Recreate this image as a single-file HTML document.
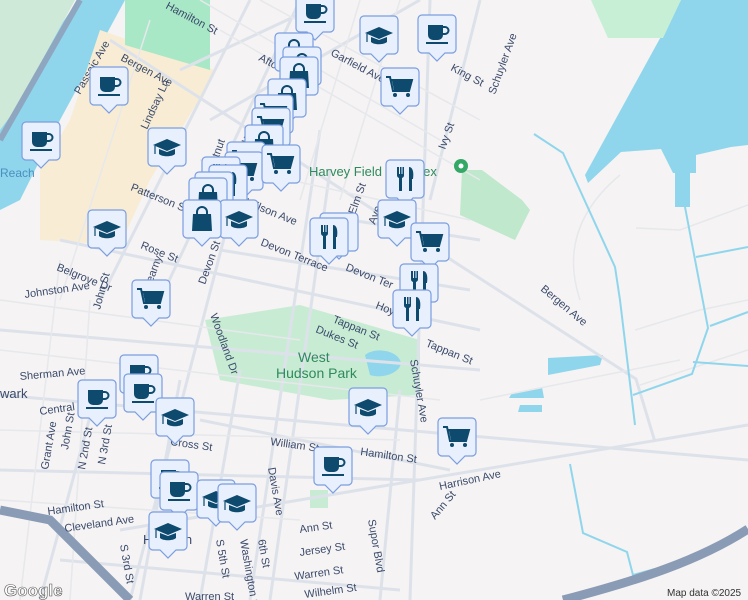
<!DOCTYPE html>
<html><head><meta charset="utf-8"><style>
body{margin:0;width:748px;height:600px;overflow:hidden;background:#f5f3f3;font-family:"Liberation Sans",sans-serif}
#map{position:absolute;left:0;top:0}
</style></head><body>
<svg id="map" width="748" height="600" viewBox="0 0 748 600">
<defs>
<g id="pin"><path d="M4 0h30a4 4 0 0 1 4 4v30a4 4 0 0 1-4 4h-7l-8 8-8-8H4a4 4 0 0 1-4-4V4a4 4 0 0 1 4-4z" fill="#e8effd" stroke="#7a9ee0" stroke-width="1.2"/></g>
<g id="cup"><use href="#pin"/><path d="M10 10h15v10a5 5 0 0 1-5 5h-5a5 5 0 0 1-5-5z" fill="#0d4a6e"/><path d="M25 12h2a3 3 0 0 1 0 7h-2" fill="none" stroke="#0d4a6e" stroke-width="2"/><rect x="8" y="27" width="22" height="2" fill="#0d4a6e"/></g>
<g id="cap"><use href="#pin"/><path d="M5 17l14-6 14 6-14 6z" fill="#0d4a6e"/><path d="M11 21v5c3 3 13 3 16 0v-5l-8 3z" fill="#0d4a6e"/><line x1="7" y1="18" x2="7" y2="26" stroke="#0d4a6e" stroke-width="1.2"/></g>
<g id="cart"><use href="#pin"/><path d="M5 9h4l3 14h16l3-11H10" fill="none" stroke="#0d4a6e" stroke-width="2"/><path d="M11 13h19l-2 9H13z" fill="#0d4a6e"/><circle cx="14" cy="27" r="2" fill="#0d4a6e"/><circle cx="27" cy="27" r="2" fill="#0d4a6e"/></g>
<g id="bag"><use href="#pin"/><path d="M10 14h18l1 17H9z" fill="#0d4a6e"/><path d="M14 15v-3a5 5 0 0 1 10 0v3" fill="none" stroke="#0d4a6e" stroke-width="2"/></g>
<g id="fork"><use href="#pin"/><path d="M11 7v8a3 3 0 0 0 2 3v13h3V18a3 3 0 0 0 2-3V7h-1.5v7h-1V7H14v7h-1V7z" fill="#0d4a6e"/><path d="M23 7c4 0 5 6 4 12h-1v12h-3z" fill="#0d4a6e"/></g>
</defs>
<!-- water -->
<path d="M78 0L125 0 60 120 20 200 0 210 0 120 30 70z" fill="#8fd6ec"/>
<path d="M681 0H748V145L731 147 696 155 696 173 673 173 661 149 621 152 588 183 585 175z" fill="#8fd6ec"/>
<rect x="675" y="172" width="15" height="35" fill="#8fd6ec"/>
<path d="M591 0h90l-18 38h-55z" fill="#c6efd6"/>
<path d="M0 0h75L15 110 0 130z" fill="#cfe9d8"/>
<path d="M80 0L0 140" stroke="#8fa6c0" stroke-width="6"/>
<!-- beige -->
<path d="M100 30L215 70 205 90 150 180 120 245 40 240 40 170 70 120z" fill="#f8edd4"/>
<path d="M125 0h85l0 70-85-25z" fill="#a8e8c6"/>
<!-- parks -->
<path d="M205 320L300 305 420 340 420 395 330 400 220 380z" fill="#c8ecd3"/>
<path d="M365 355c10-8 30-5 35 5s-15 20-30 15z" fill="#8fd6ec"/>
<path d="M462 170l20 0 40 30 8 10-15 30-55-25z" fill="#bfe8cc"/>
<path d="M548 358l55-3-3 10-52 10z" fill="#8fd6ec"/>
<path d="M512 393l30-6 2 11h-35z" fill="#8fd6ec"/>
<path d="M520 405h22v7h-24z" fill="#8fd6ec"/>
<rect x="310" y="490" width="18" height="18" fill="#c8ecd3"/>
<!-- roads -->
<g stroke="#dde2ea" stroke-width="3" fill="none">
<path d="M0 395L748 460"/><path d="M0 330L480 370"/><path d="M60 240L480 330"/><path d="M110 40L636 379 655 442"/>
<path d="M120 530L748 425"/><path d="M180 70L330 0"/><path d="M210 120L420 0"/><path d="M430 0L410 600"/>
<path d="M480 0L430 200"/><path d="M320 130L250 600"/><path d="M260 100L130 600"/><path d="M330 170L270 600"/>
<path d="M200 420L450 470"/><path d="M0 470L420 480"/><path d="M60 560L400 590"/><path d="M400 390L380 600"/>
<path d="M100 380L40 600"/><path d="M180 380L140 600"/><path d="M240 370L200 600"/>
<path d="M250 0L100 300"/><path d="M300 0L160 300"/><path d="M220 250L470 290"/><path d="M350 220L480 240"/>
</g>
<g stroke="#e6e8ec" stroke-width="1.5" fill="none">
<path d="M0 300L300 340"/><path d="M0 350L440 400"/><path d="M0 430L400 440"/><path d="M0 500L300 520"/><path d="M200 0L440 140"/><path d="M260 0L480 120"/><path d="M220 30L480 180"/><path d="M200 160L470 220"/><path d="M360 0L300 200"/><path d="M400 0L340 200"/><path d="M60 260L20 600"/><path d="M90 300L70 600"/><path d="M150 20L60 300"/>
<path d="M636 228L680 230 748 205"/><path d="M635 330L700 310 748 300"/><path d="M640 385L748 350"/><path d="M580 300C560 240 590 200 620 175"/><path d="M480 400L680 360"/>
</g>
<g stroke="#8fd6ec" stroke-width="2" fill="none"><path d="M534 134L563 153 615 267 620 300 635 425"/><path d="M685 207L708 328 692 374 633 395"/><path d="M696 257L748 247"/><path d="M710 326L748 312"/><path d="M693 362L748 366"/><path d="M570 464L583 533 627 552 633 575 655 569"/></g>
<path d="M0 510L50 520 130 600" stroke="#8a9bb5" stroke-width="9" fill="none"/>
<path d="M563 600C640 580 700 560 748 529" stroke="#8a9bb5" stroke-width="9" fill="none"/>
<!-- labels -->
<g font-size="11" fill="#3a4a6b" font-family="Liberation Sans,sans-serif">
<text x="120" y="60" transform="rotate(28 120 60)">Bergen Ave</text>
<text x="165" y="8" transform="rotate(28 165 8)">Hamilton St</text>
<text x="330" y="55" transform="rotate(28 330 55)">Garfield Ave</text>
<text x="258" y="60" transform="rotate(28 258 60)">Afton</text>
<text x="450" y="70" transform="rotate(28 450 70)">King St</text>
<text x="495" y="95" transform="rotate(-70 495 95)">Schuyler Ave</text>
<text x="445" y="150" transform="rotate(-70 445 150)">Ivy St</text>
<text x="130" y="190" transform="rotate(22 130 190)">Patterson St</text>
<text x="245" y="205" transform="rotate(22 245 205)">Wilson Ave</text>
<text x="260" y="245" transform="rotate(22 260 245)">Devon Terrace</text>
<text x="345" y="270" transform="rotate(22 345 270)">Devon Ter</text>
<text x="140" y="248" transform="rotate(22 140 248)">Rose St</text>
<text x="56" y="270" transform="rotate(22 56 270)">Belgrove Dr</text>
<text x="25" y="298" transform="rotate(-8 25 298)">Johnston Ave</text>
<text x="332" y="322" transform="rotate(22 332 322)">Tappan St</text>
<text x="425" y="346" transform="rotate(22 425 346)">Tappan St</text>
<text x="315" y="332" transform="rotate(22 315 332)">Dukes St</text>
<text x="375" y="308" transform="rotate(22 375 308)">Hoy</text>
<text x="540" y="290" transform="rotate(40 540 290)">Bergen Ave</text>
<text x="410" y="360" transform="rotate(80 410 360)">Schuyler Ave</text>
<text x="40" y="415" transform="rotate(-8 40 415)">Central Ave</text>
<text x="20" y="380" transform="rotate(-5 20 380)">Sherman Ave</text>
<text x="170" y="445" transform="rotate(8 170 445)">Cross St</text>
<text x="270" y="445" transform="rotate(8 270 445)">William St</text>
<text x="360" y="455" transform="rotate(8 360 455)">Hamilton St</text>
<text x="440" y="490" transform="rotate(-12 440 490)">Harrison Ave</text>
<text x="435" y="520" transform="rotate(-50 435 520)">Ann St</text>
<text x="65" y="532" transform="rotate(-8 65 532)">Cleveland Ave</text>
<text x="48" y="515" transform="rotate(-8 48 515)">Hamilton St</text>
<text x="300" y="533" transform="rotate(-8 300 533)">Ann St</text>
<text x="300" y="556" transform="rotate(-8 300 556)">Jersey St</text>
<text x="295" y="580" transform="rotate(-8 295 580)">Warren St</text>
<text x="305" y="598" transform="rotate(-8 305 598)">Wilhelm St</text>
<text x="185" y="600">Warren St</text>
<text x="368" y="520" transform="rotate(80 368 520)">Supor Blvd</text>
<text x="268" y="468" transform="rotate(80 268 468)">Davis Ave</text>
<text x="210" y="315" transform="rotate(70 210 315)">Woodland Dr</text>
<text x="150" y="290" transform="rotate(-70 150 290)">Kearny</text>
<text x="205" y="285" transform="rotate(-70 205 285)">Devon St</text>
<text x="100" y="310" transform="rotate(-75 100 310)">John St</text>
<text x="220" y="190" transform="rotate(-60 220 190)">Highland Ave</text>
<text x="210" y="182" transform="rotate(-70 210 182)">Chestnut</text>
<text x="355" y="215" transform="rotate(-70 355 215)">Elm St</text>
<text x="375" y="225" transform="rotate(-70 375 225)">Ave</text>
<text x="48" y="470" transform="rotate(-80 48 470)">Grant Ave</text>
<text x="68" y="450" transform="rotate(-80 68 450)">John St</text>
<text x="85" y="470" transform="rotate(-80 85 470)">N 2nd St</text>
<text x="105" y="465" transform="rotate(-80 105 465)">N 3rd St</text>
<text x="80" y="95" transform="rotate(-60 80 95)">Passaic Ave</text>
<text x="147" y="130" transform="rotate(-65 147 130)">Lindsay Ln</text>
<text x="0" y="398" fill="#3a4a6b" font-size="13">wark</text>
<text x="143" y="544" font-size="13">Harrison</text>
<text x="258" y="540" transform="rotate(80 258 540)">6th St</text>
<text x="240" y="540" transform="rotate(80 240 540)">Washington St</text>
<text x="216" y="540" transform="rotate(80 216 540)">S 5th St</text>
<text x="120" y="545" transform="rotate(80 120 545)">S 3rd St</text>
</g>
<text x="0" y="177" font-size="12" fill="#4a8fc0">Reach</text>
<text x="309" y="176" font-size="13" fill="#2e8a5c">Harvey Field Complex</text>
<circle cx="461" cy="166" r="7" fill="#34a867"/><circle cx="461" cy="166" r="2.5" fill="#fff"/>
<text x="298" y="362" font-size="14" fill="#2e8a5c">West</text>
<text x="276" y="378" font-size="14" fill="#2e8a5c">Hudson Park</text>
<text x="667" y="596" font-size="10" fill="#333">Map data ©2025</text>
<text x="4" y="596" font-size="17" font-weight="bold" fill="#fff" stroke="#555" stroke-width="0.6">Google</text>
<!-- markers -->
<use href="#cup" x="296" y="-6"/><use href="#cap" x="360" y="16"/><use href="#cup" x="418" y="15"/>
<use href="#bag" x="275" y="33"/><use href="#bag" x="283" y="47"/><use href="#bag" x="280" y="57"/>
<use href="#cart" x="381" y="68"/><use href="#cup" x="90" y="67"/><use href="#cup" x="22" y="122"/>
<use href="#bag" x="268" y="79"/><use href="#cart" x="255" y="95"/><use href="#cart" x="252" y="108"/>
<use href="#bag" x="245" y="125"/><use href="#cap" x="148" y="128"/>
<use href="#cart" x="227" y="142"/><use href="#cart" x="225" y="152"/><use href="#cart" x="262" y="145"/>
<use href="#fork" x="202" y="157"/><use href="#fork" x="209" y="165"/><use href="#bag" x="195" y="172"/>
<use href="#bag" x="189" y="178"/><use href="#fork" x="386" y="160"/><use href="#cap" x="220" y="200"/>
<use href="#bag" x="183" y="200"/><use href="#cap" x="88" y="210"/><use href="#fork" x="320" y="213"/>
<use href="#fork" x="310" y="218"/><use href="#cap" x="378" y="200"/><use href="#cart" x="411" y="223"/>
<use href="#fork" x="400" y="264"/><use href="#fork" x="393" y="290"/><use href="#cart" x="132" y="280"/>
<use href="#cup" x="120" y="355"/><use href="#cup" x="124" y="374"/><use href="#cup" x="78" y="380"/>
<use href="#cap" x="156" y="398"/><use href="#cap" x="349" y="388"/><use href="#cart" x="438" y="418"/>
<use href="#cup" x="314" y="447"/><use href="#cup" x="151" y="460"/><use href="#cup" x="160" y="472"/>
<use href="#cap" x="197" y="480"/><use href="#cap" x="218" y="484"/><use href="#cap" x="149" y="512"/>
</svg>
</body></html>
